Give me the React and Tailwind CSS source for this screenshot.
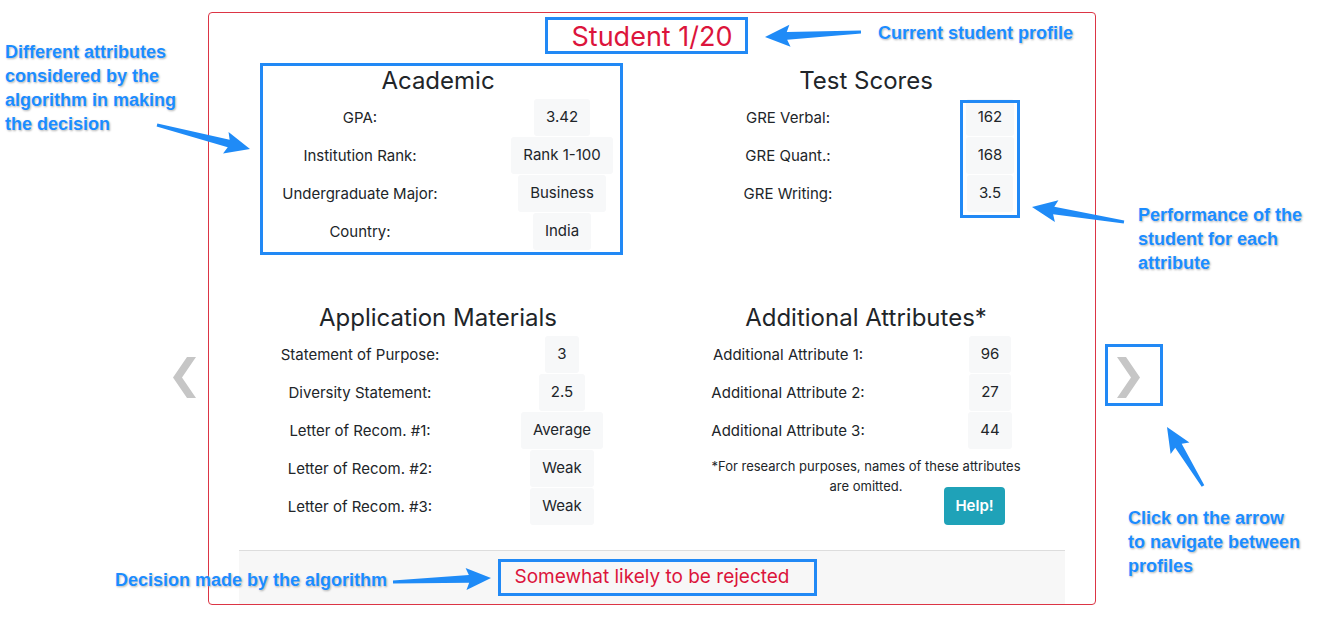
const ACADEMIC = [
  ['GPA:', '3.42'],
  ['Institution Rank:', 'Rank 1-100'],
  ['Undergraduate Major:', 'Business'],
  ['Country:', 'India'],
]

const TEST_SCORES = [
  ['GRE Verbal:', '162'],
  ['GRE Quant.:', '168'],
  ['GRE Writing:', '3.5'],
]

const MATERIALS = [
  ['Statement of Purpose:', '3'],
  ['Diversity Statement:', '2.5'],
  ['Letter of Recom. #1:', 'Average'],
  ['Letter of Recom. #2:', 'Weak'],
  ['Letter of Recom. #3:', 'Weak'],
]

const ADDITIONAL = [
  ['Additional Attribute 1:', '96'],
  ['Additional Attribute 2:', '27'],
  ['Additional Attribute 3:', '44'],
]

// annotation arrows: [x1, y1, x2, y2] tail -> tip
const ARROWS = [
  [157, 125, 250, 149],
  [861, 32, 765, 37],
  [1124, 222, 1032, 207],
  [1203, 486, 1167, 427],
  [393, 582, 491, 578],
]

function Row({ label, value }) {
  return (
    <div className="flex h-[38px]">
      <div className="w-[272px] flex items-center justify-center text-[15px]">{label}</div>
      <div className="w-[132px] flex justify-center">
        <span className="h-[37px] px-3 flex items-center bg-[#f7f8f9] rounded-[3px] text-[15px]">{value}</span>
      </div>
    </div>
  )
}

function Section({ title, rows }) {
  return (
    <div className="flex flex-col">
      <h2 className="text-center text-[24px] leading-[29px] mb-[4px]">{title}</h2>
      {rows.map(([l, v]) => (
        <Row key={l} label={l} value={v} />
      ))}
    </div>
  )
}

function Arrow({ x1, y1, x2, y2 }) {
  const dx = x2 - x1
  const dy = y2 - y1
  const L = Math.sqrt(dx * dx + dy * dy)
  const a = (Math.atan2(dy, dx) * 180) / Math.PI
  const pts = [
    [0, -1.5],
    [L - 22, -3.8],
    [L - 25, -11],
    [L, 0],
    [L - 25, 11],
    [L - 22, 3.8],
    [0, 1.5],
  ]
    .map(p => p.join(','))
    .join(' ')
  return (
    <polygon
      points={pts}
      transform={`translate(${x1} ${y1}) rotate(${a})`}
      fill="#1f8bf7"
    />
  )
}

function Note({ className, children }) {
  return (
    <div
      className={`absolute font-['Liberation_Sans',Arial,sans-serif] font-bold text-[18px] leading-[24px] text-[#1b8cff] [text-shadow:0_0_2px_#fff,1px_1px_2px_rgba(0,0,0,0.35)] ${className}`}
    >
      {children}
    </div>
  )
}

function Chevron({ flip }) {
  return (
    <svg width="23" height="41" viewBox="0 0 23 41" className={flip ? 'scale-x-[-1]' : ''}>
      <polygon points="0,20.5 14,0 23,0 9,20.5 23,41 14,41" fill="#c6c6c6" />
    </svg>
  )
}

export default function App() {
  return (
    <div className="relative w-[1335px] h-[619px] bg-white overflow-hidden font-['Inter',sans-serif] text-[#212529]">
      <div className="flex items-start pt-[12px]">
        {/* prev */}
        <div className="w-[208px] flex justify-end pr-[12px] pt-[345px]">
          <Chevron />
        </div>

        {/* card */}
        <div className="w-[888px] h-[593px] border border-[#dc3545] rounded-[4px] flex flex-col">
          <h1 className="text-center pt-[8px] text-[27px] leading-[32px] text-[#dc143c]">Student 1/20</h1>

          <div className="grid grid-cols-2 w-[856px] ml-[15px] mt-[13px]">
            <Section title="Academic" rows={ACADEMIC} />
            <Section title="Test Scores" rows={TEST_SCORES} />
          </div>

          <div className="grid grid-cols-2 w-[856px] ml-[15px] mt-[52px]">
            <Section title="Application Materials" rows={MATERIALS} />
            <div className="flex flex-col">
              <Section title="Additional Attributes*" rows={ADDITIONAL} />
              <p className="mt-[6px] text-center text-[13px] leading-[20px]">
                *For research purposes, names of these attributes
                <br />
                are omitted.
              </p>
              <button className="self-start ml-[292px] -mt-[9px] w-[61px] h-[38px] rounded-[4px] bg-[#1fa2b8] text-white text-[15px] font-semibold">
                Help!
              </button>
            </div>
          </div>

          {/* decision */}
          <div className="mt-auto mx-[30px] h-[54px] border-t border-[#dddddd] bg-[#f7f7f7] flex items-center justify-center">
            <span className="text-[19px] text-[#dc143c]">Somewhat likely to be rejected</span>
          </div>
        </div>

        {/* next */}
        <div className="pl-[21px] pt-[345px]">
          <Chevron flip />
        </div>
      </div>

      {/* annotation boxes */}
      <div className="absolute left-[545px] top-[17px] w-[203px] h-[37px] border-[3px] border-[#2189f5]" />
      <div className="absolute left-[260px] top-[63px] w-[363px] h-[192px] border-[3px] border-[#2189f5]" />
      <div className="absolute left-[960px] top-[100px] w-[60px] h-[118px] border-[3px] border-[#2189f5]" />
      <div className="absolute left-[1105px] top-[344px] w-[58px] h-[62px] border-[3px] border-[#2189f5]" />
      <div className="absolute left-[498px] top-[559px] w-[319px] h-[37px] border-[3px] border-[#2189f5]" />

      <svg className="absolute left-0 top-0 pointer-events-none" width="1335" height="619">
        {ARROWS.map(([x1, y1, x2, y2], i) => (
          <Arrow key={i} x1={x1} y1={y1} x2={x2} y2={y2} />
        ))}
      </svg>

      {/* annotation notes */}
      <Note className="left-[5px] top-[40px]">
        Different attributes
        <br />
        considered by the
        <br />
        algorithm in making
        <br />
        the decision
      </Note>
      <Note className="left-[878px] top-[21px]">Current student profile</Note>
      <Note className="left-[1138px] top-[203px]">
        Performance of the
        <br />
        student for each
        <br />
        attribute
      </Note>
      <Note className="left-[1128px] top-[506px]">
        Click on the arrow
        <br />
        to navigate between
        <br />
        profiles
      </Note>
      <Note className="left-[115px] top-[568px]">Decision made by the algorithm</Note>
    </div>
  )
}
